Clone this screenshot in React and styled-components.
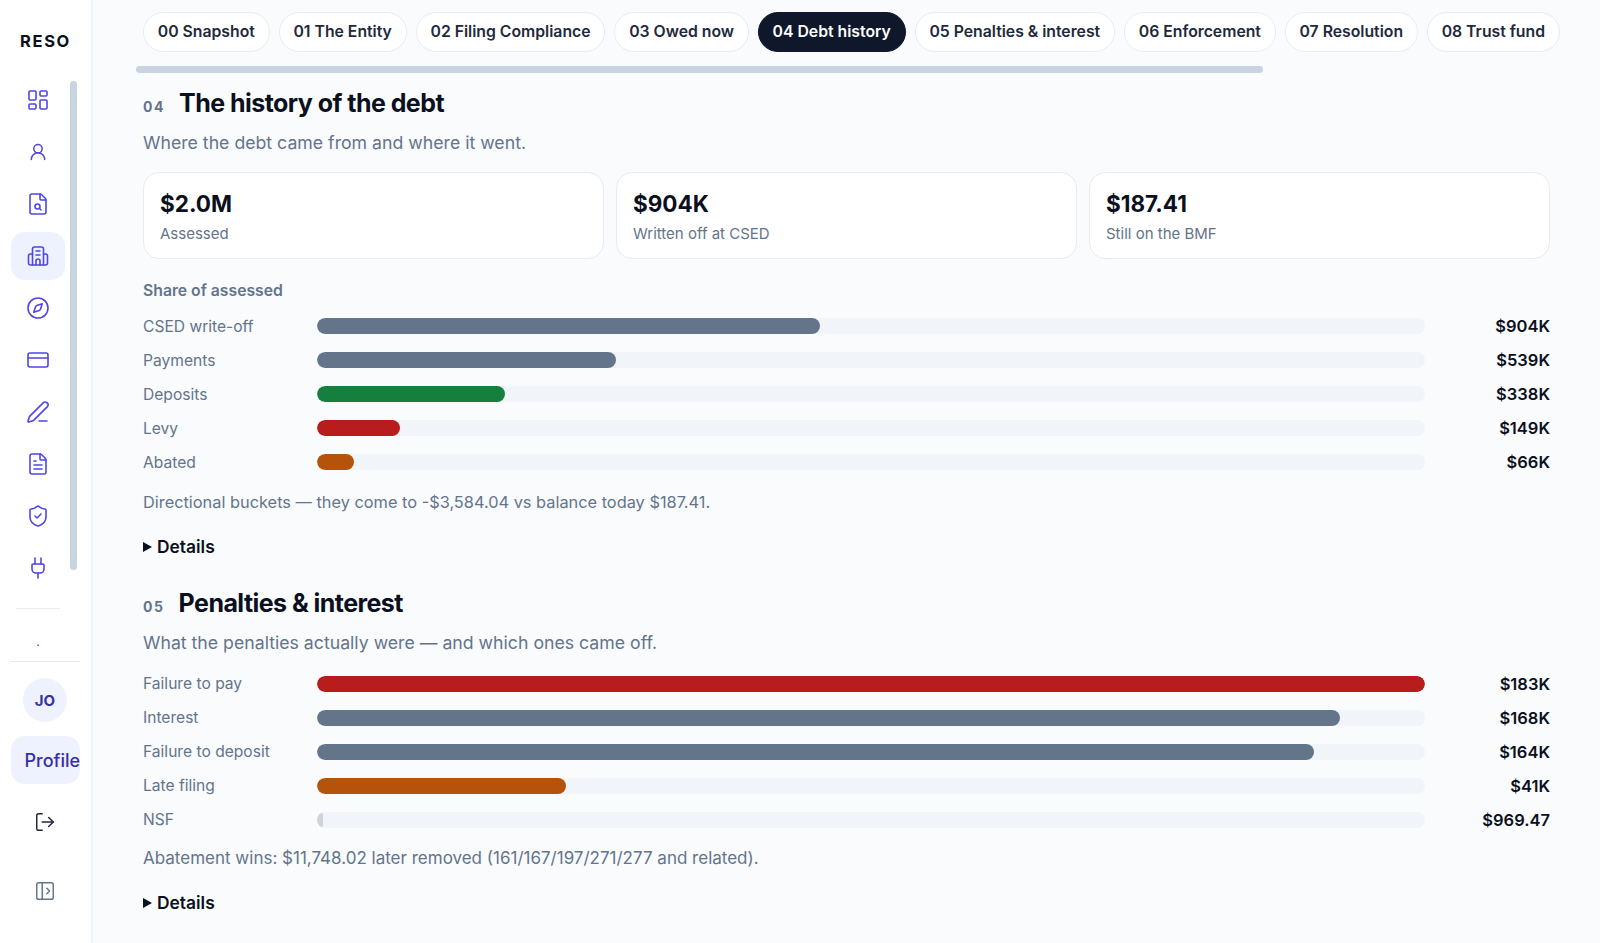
import React from 'react';
import styled, { createGlobalStyle } from 'styled-components';
import {
  UserRound, FileSearch, Compass, CreditCard, PenLine, FileText,
  ShieldCheck, Plug, LogOut, PanelLeftOpen, LayoutDashboard,
} from 'lucide-react';

const tabs = [
  '00 Snapshot', '01 The Entity', '02 Filing Compliance', '03 Owed now', '04 Debt history',
  '05 Penalties & interest', '06 Enforcement', '07 Resolution', '08 Trust fund',
];

const stats = [
  { value: '$2.0M', label: 'Assessed' },
  { value: '$904K', label: 'Written off at CSED' },
  { value: '$187.41', label: 'Still on the BMF' },
];

const SLATE = '#64748b';
const GREEN = '#15803d';
const RED = '#b91c1c';
const ORANGE = '#b45309';
const PALE = '#cbd5e1';

const shareRows = [
  { label: 'CSED write-off', amount: '$904K', pct: 45.4, color: SLATE },
  { label: 'Payments', amount: '$539K', pct: 27, color: SLATE },
  { label: 'Deposits', amount: '$338K', pct: 17, color: GREEN },
  { label: 'Levy', amount: '$149K', pct: 7.5, color: RED },
  { label: 'Abated', amount: '$66K', pct: 3.3, color: ORANGE },
];

const penaltyRows = [
  { label: 'Failure to pay', amount: '$183K', pct: 100, color: RED },
  { label: 'Interest', amount: '$168K', pct: 92.3, color: SLATE },
  { label: 'Failure to deposit', amount: '$164K', pct: 90, color: SLATE },
  { label: 'Late filing', amount: '$41K', pct: 22.5, color: ORANGE },
  { label: 'NSF', amount: '$969.47', pct: 0.5, color: PALE },
];

function BuildingIcon() {
  return (
    <svg width="24" height="24" viewBox="0 0 24 24" fill="none" stroke="currentColor" strokeWidth="1.6" strokeLinecap="round" strokeLinejoin="round">
      <path d="M6.5 21V5a2 2 0 0 1 2-2h7a2 2 0 0 1 2 2v16" />
      <path d="M6.5 10H4.5a2 2 0 0 0-2 2v7a2 2 0 0 0 2 2h15a2 2 0 0 0 2-2v-7a2 2 0 0 0-2-2h-2" />
      <path d="M10 7h4M10 11h4" />
      <path d="M10 21v-4a2 2 0 0 1 4 0v4" />
    </svg>
  );
}

const navIcons = [
  <LayoutDashboard key="a" size={24} strokeWidth={1.6} />,
  <UserRound key="b" size={20} strokeWidth={1.8} />,
  <FileSearch key="c" size={24} strokeWidth={1.6} />,
  <BuildingIcon key="d" />,
  <Compass key="e" size={24} strokeWidth={1.6} />,
  <CreditCard key="f" size={24} strokeWidth={1.6} />,
  <PenLine key="g" size={24} strokeWidth={1.6} />,
  <FileText key="h" size={24} strokeWidth={1.6} />,
  <ShieldCheck key="i" size={24} strokeWidth={1.6} />,
  <Plug key="j" size={24} strokeWidth={1.6} />,
];

function BarList({ rows, top }) {
  return (
    <Bars $top={top}>
      {rows.map((r) => (
        <BarRow key={r.label}>
          <BarLabel>{r.label}</BarLabel>
          <Track>
            <Fill $color={r.color} style={{ width: `${r.pct}%` }} />
          </Track>
          <Amount>{r.amount}</Amount>
        </BarRow>
      ))}
    </Bars>
  );
}

export default function App() {
  return (
    <Shell>
      <GlobalStyle />
      <Sidebar>
        <Logo>RESO</Logo>
        <NavList>
          {navIcons.map((icon, i) => (
            <NavItem key={i} $active={i === 3}>{icon}</NavItem>
          ))}
          <NavThumb />
        </NavList>
        <ShortRule />
        <Dot>.</Dot>
        <WideRule />
        <Avatar>JO</Avatar>
        <ProfileButton>Profile</ProfileButton>
        <FootIcon $top={27}><LogOut size={22} strokeWidth={1.6} /></FootIcon>
        <FootIcon $top={45} $muted><PanelLeftOpen size={22} strokeWidth={1.6} /></FootIcon>
      </Sidebar>
      <Main>
        <TabBar>
          {tabs.map((t, i) => (
            <Tab key={t} $active={i === 4}>{t}</Tab>
          ))}
        </TabBar>
        <TabThumb />
        <Section>
          <Heading>
            <Num>04</Num>
            <Title>The history of the debt</Title>
          </Heading>
          <Lead>Where the debt came from and where it went.</Lead>
          <Stats>
            {stats.map((s) => (
              <Stat key={s.label}>
                <StatValue>{s.value}</StatValue>
                <StatLabel>{s.label}</StatLabel>
              </Stat>
            ))}
          </Stats>
          <BarsTitle>Share of assessed</BarsTitle>
          <BarList rows={shareRows} top={15} />
          <Note $top={18} $size={16.35}>Directional buckets — they come to -$3,584.04 vs balance today $187.41.</Note>
          <Details>Details</Details>
        </Section>
        <Section $second>
          <Heading>
            <Num>05</Num>
            <Title>Penalties &amp; interest</Title>
          </Heading>
          <Lead>What the penalties actually were — and which ones came off.</Lead>
          <BarList rows={penaltyRows} top={18} />
          <Note $top={16} $size={17}>Abatement wins: $11,748.02 later removed (161/167/197/271/277 and related).</Note>
          <Details>Details</Details>
        </Section>
      </Main>
    </Shell>
  );
}

const GlobalStyle = createGlobalStyle`
  html, body {
    margin: 0;
    height: 100%;
    overflow: hidden;
    background: #f9fbfd;
    font-family: Inter, "Liberation Sans", sans-serif;
  }
`;

const Shell = styled.div`
  display: flex;
  height: 943px;
  overflow: hidden;
`;

const Sidebar = styled.aside`
  width: 91px;
  flex: none;
  display: flex;
  flex-direction: column;
  align-items: flex-start;
  background: #fff;
  border-right: 2px solid #f1f5f9;
  overflow: hidden;
`;

const Logo = styled.div`
  width: 91px;
  margin-top: 31px;
  text-align: center;
  font-size: 16.5px;
  line-height: 20px;
  font-weight: 700;
  letter-spacing: 1.6px;
  color: #0b1020;
`;

const NavList = styled.nav`
  position: relative;
  display: flex;
  flex-direction: column;
  gap: 4px;
  margin: 25px 0 0 11px;
  width: 70px;
`;

const NavItem = styled.a`
  width: 54px;
  height: 48px;
  display: flex;
  align-items: center;
  justify-content: center;
  border-radius: 14px;
  color: #4f46e5;
  background: ${(p) => (p.$active ? '#eef2ff' : 'transparent')};
`;

const NavThumb = styled.span`
  position: absolute;
  left: 59px;
  top: 5px;
  width: 7px;
  height: 489px;
  border-radius: 4px;
  background: #c8d5e0;
`;

const ShortRule = styled.hr`
  width: 44px;
  height: 1px;
  margin: 16px 0 0 16px;
  border: 0;
  background: #e8ecf1;
`;

const Dot = styled.div`
  width: 76px;
  height: 16px;
  margin-top: 27px;
  text-align: center;
  font-size: 11px;
  line-height: 12px;
  color: #3730a3;
`;

const WideRule = styled.hr`
  width: 70px;
  height: 1px;
  margin: 9px 0 0 10px;
  border: 0;
  background: #e8ecf1;
`;

const Avatar = styled.div`
  width: 44px;
  height: 44px;
  margin: 16px 0 0 23px;
  display: flex;
  align-items: center;
  justify-content: center;
  border-radius: 50%;
  background: #eef2ff;
  color: #3730a3;
  font-size: 15px;
  font-weight: 700;
`;

const ProfileButton = styled.div`
  width: 69px;
  height: 48px;
  margin: 14px 0 0 11px;
  padding-left: 13.5px;
  box-sizing: border-box;
  display: flex;
  align-items: center;
  overflow: hidden;
  white-space: nowrap;
  border-radius: 14px;
  background: #eef2ff;
  color: #3730a3;
  font-size: 18px;
  font-weight: 550;
`;

const FootIcon = styled.div`
  width: 90px;
  height: 24px;
  margin-top: ${(p) => p.$top}px;
  display: flex;
  justify-content: center;
  color: ${(p) => (p.$muted ? '#64748b' : '#1e293b')};
`;

const Main = styled.main`
  flex: 1;
  min-width: 0;
  padding: 12px 50px 0 43px;
  box-sizing: border-box;
  background: #f9fbfd;
`;

const TabBar = styled.div`
  display: flex;
  gap: 9px;
  margin: 0 -12px 0 7px;
  overflow: hidden;
  white-space: nowrap;
`;

const Tab = styled.button`
  flex: none;
  height: 40px;
  padding: 0 13.8px 2px;
  border-radius: 20px;
  border: 1px solid ${(p) => (p.$active ? '#0f172a' : '#e7ecf2')};
  background: ${(p) => (p.$active ? '#0f172a' : '#fff')};
  color: ${(p) => (p.$active ? '#fff' : '#1e293b')};
  font-family: inherit;
  font-size: 15.77px;
  font-weight: 600;
`;

const TabThumb = styled.div`
  width: 1127px;
  height: 7px;
  margin: 14px 0 0 0;
  border-radius: 4px;
  background: #c8d5e0;
`;

const Section = styled.section`
  margin: 0 0 0 7px;
  padding-top: ${(p) => (p.$second ? 27 : 13)}px;
`;

const Heading = styled.div`
  display: flex;
  align-items: baseline;
  gap: 14px;
`;

const Num = styled.span`
  font-size: 14px;
  font-weight: 700;
  letter-spacing: 1.6px;
  color: #64748b;
`;

const Title = styled.h2`
  margin: 0;
  font-size: 25px;
  line-height: 34px;
  font-weight: 700;
  letter-spacing: -0.55px;
  color: #0b1020;
`;

const Lead = styled.p`
  margin: 10px 0 0;
  font-size: 17.7px;
  line-height: 26px;
  color: #64748b;
`;

const Stats = styled.div`
  display: grid;
  grid-template-columns: repeat(3, 1fr);
  gap: 12px;
  margin-top: 16px;
`;

const Stat = styled.div`
  height: 87px;
  box-sizing: border-box;
  padding: 16px;
  background: #fff;
  border: 1px solid #e7ecf2;
  border-radius: 16px;
`;

const StatValue = styled.div`
  font-size: 22.5px;
  line-height: 30px;
  font-weight: 700;
  color: #0b1020;
`;

const StatLabel = styled.div`
  margin-top: 5px;
  font-size: 15px;
  line-height: 20px;
  color: #64748b;
`;

const BarsTitle = styled.div`
  margin-top: 22px;
  font-size: 15.75px;
  line-height: 20px;
  font-weight: 600;
  color: #64748b;
`;

const Bars = styled.div`
  display: flex;
  flex-direction: column;
  gap: 14px;
  margin-top: ${(p) => p.$top}px;
`;

const BarRow = styled.div`
  display: grid;
  grid-template-columns: 174px 1fr 125px;
  align-items: center;
  height: 20px;
`;

const BarLabel = styled.span`
  font-size: 15.6px;
  color: #64748b;
`;

const Track = styled.div`
  height: 16px;
  border-radius: 8px;
  background: #f1f5f9;
  overflow: hidden;
`;

const Fill = styled.div`
  height: 100%;
  border-radius: 8px;
  background: ${(p) => p.$color};
`;

const Amount = styled.span`
  text-align: right;
  font-size: 16.5px;
  font-weight: 600;
  color: #0b1020;
`;

const Note = styled.p`
  margin: ${(p) => p.$top}px 0 0;
  font-size: ${(p) => p.$size}px;
  line-height: 1.5;
  color: #64748b;
`;

const Details = styled.div`
  margin-top: 20px;
  display: flex;
  align-items: center;
  gap: 5px;
  font-size: 17.4px;
  line-height: 24px;
  font-weight: 600;
  color: #0b1020;
  &::before {
    content: '';
    border-left: 9px solid #0b1020;
    border-top: 5px solid transparent;
    border-bottom: 5px solid transparent;
  }
`;
